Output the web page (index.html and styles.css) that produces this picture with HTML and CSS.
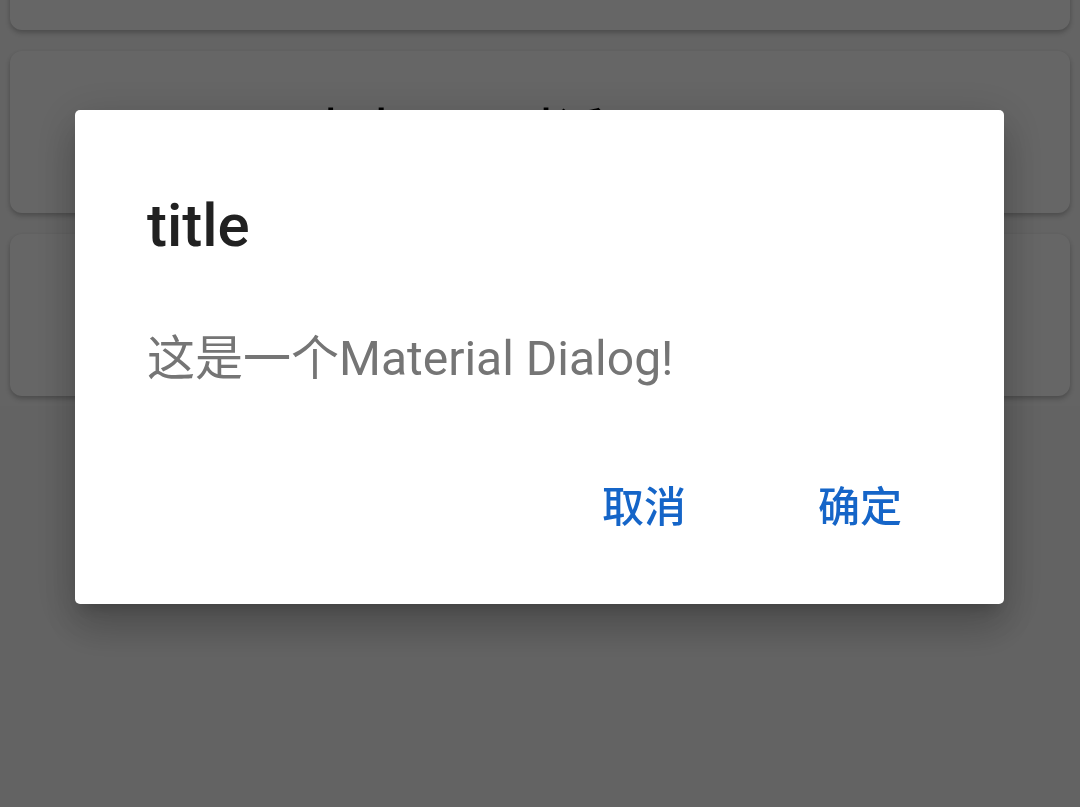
FILE: index.html
```html
<!DOCTYPE html>
<html lang="zh-CN">
  <head>
    <meta charset="UTF-8" />
    <meta name="viewport" content="width=device-width, initial-scale=1.0" />
    <title>Material Dialog</title>
    <link rel="stylesheet" href="styles.css">
  </head>
  <body>
    <!-- Cartes de la page en arrière-plan -->
    <div class="card-list">
      <div class="card card-first"></div>
      <div class="card">
        <span class="card-label">点击显示对话</span>
      </div>
      <div class="card"></div>
    </div>

    <!-- Dialogue -->
    <div class="overlay">
      <div class="dialog">
        <h3 class="dialog-title">title</h3>
        <p class="dialog-message">这是一个Material Dialog!</p>
        <div class="dialog-actions">
          <button class="dialog-btn">取消</button>
          <button class="dialog-btn">确定</button>
        </div>
      </div>
    </div>
  </body>
</html>
```

FILE: styles.css
```css
/* Base */
body {
  font-family: Roboto, "Noto Sans CJK SC", sans-serif;
  background-color: #f7f7f7;
  margin: 0;
  padding: 0;
  height: 807px;
  overflow: hidden;
}

/* Liste de cartes */
.card-list {
  display: flex;
  flex-direction: column;
  gap: 21px;
  padding: 0 10px 10px;
  background: #fafafa;
}

.card {
  height: 162px;
  background: #ffffff;
  border-radius: 12px;
  box-shadow: 0 3px 6px rgba(0, 0, 0, 0.16), 0 2px 4px rgba(0, 0, 0, 0.12);
  overflow: hidden;
}

.card-first {
  margin-top: -132px;
}

.card-label {
  display: block;
  padding: 57px 0 0 296px;
  font-size: 50px;
  line-height: 50px;
  font-weight: 500;
  color: #000000;
}

/* Voile sombre */
.overlay {
  position: fixed;
  top: 0;
  left: 0;
  width: 100%;
  height: 100%;
  background: rgba(0, 0, 0, 0.6);
  display: flex;
  justify-content: center;
  align-items: flex-start;
  padding: 110px 0 0 0;
  box-sizing: border-box;
}

/* Dialogue */
.dialog {
  width: 929px;
  height: 494px;
  margin-right: 1px;
  background: #ffffff;
  border-radius: 5px;
  box-sizing: border-box;
  padding: 86px 0 0 72px;
  display: flex;
  flex-direction: column;
  box-shadow: 0 24px 38px 3px rgba(0, 0, 0, 0.14),
    0 9px 46px 8px rgba(0, 0, 0, 0.12), 0 11px 15px -7px rgba(0, 0, 0, 0.2);
}

.dialog-title {
  margin: 0;
  font-size: 60px;
  line-height: 60px;
  font-weight: 500;
  color: #212121;
}

.dialog-message {
  margin: 79px 0 0;
  font-size: 48px;
  line-height: 48px;
  color: #757575;
}

.dialog-actions {
  display: flex;
  justify-content: flex-end;
  gap: 24px;
  margin-top: 104px;
  padding-right: 48px;
}

.dialog-btn {
  min-width: 192px;
  padding: 0;
  background: none;
  border: none;
  font-family: Roboto, "Noto Sans CJK SC", sans-serif;
  font-size: 42px;
  line-height: 42px;
  font-weight: 500;
  color: #1565c8;
  cursor: pointer;
}
```
